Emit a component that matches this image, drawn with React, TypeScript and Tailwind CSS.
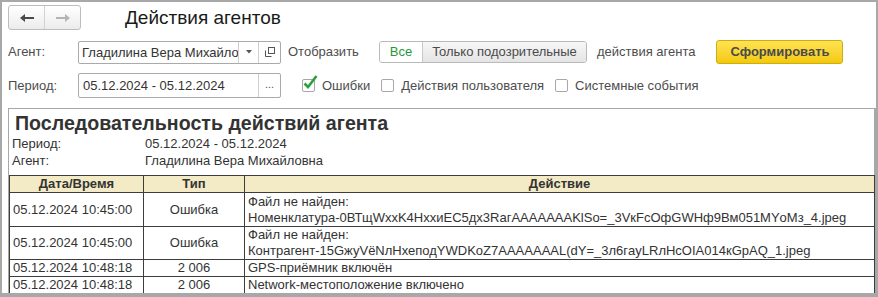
import React from "react";

const ROWS = [
  {
    date: "05.12.2024 10:45:00",
    type: "Ошибка",
    lines: [
      "Файл не найден:",
      "Номенклатура-0ВТщWxxK4НхxиЕС5дх3RагАААААААKlSo=_3VкFcОфGWHф9Вм051MYоМз_4.jpeg",
    ],
    h: "h-[34px]",
  },
  {
    date: "05.12.2024 10:45:00",
    type: "Ошибка",
    lines: [
      "Файл не найден:",
      "Контрагент-15GжуVёNлНхеподYWDKoZ7ААААААAL(dY=_3л6гayLRлНсОIА014кGpAQ_1.jpeg",
    ],
    h: "h-[33px]",
  },
  { date: "05.12.2024 10:48:18", type: "2 006", lines: ["GPS-приёмник включён"], h: "h-[17px]" },
  { date: "05.12.2024 10:48:18", type: "2 006", lines: ["Network-местоположение включено"], h: "h-[17px]" },
];

function Arrow({ dir, color }: { dir: "left" | "right"; color: string }) {
  return (
    <svg width="14" height="8" viewBox="0 0 14 8" className={dir === "right" ? "rotate-180" : ""}>
      <path d="M0 4 L5 0 V3 H14 V5 H5 V8 Z" fill={color} />
    </svg>
  );
}

function Checkbox({ checked, label }: { checked?: boolean; label: string }) {
  return (
    <label className="flex items-center">
      <span className="relative h-[13px] w-[13px] rounded-[2px] border border-[#a8a8a8] bg-white">
        {checked ? (
          <svg width="16" height="16" viewBox="0 0 16 16" className="absolute -top-[6px] left-0">
            <path d="M1.5 9.5 L5 13 L13.5 2" fill="none" stroke="#2f9e3f" strokeWidth="2.6" />
          </svg>
        ) : null}
      </span>
      <span className="ml-[7px] text-[13px] text-[#4d4d4d]">{label}</span>
    </label>
  );
}

export default function App() {
  return (
    <div className="h-[297px] w-[878px] overflow-hidden border-2 border-b-[4px] border-[#a8a8a8] bg-white font-['Liberation_Sans',Arial,sans-serif] text-[#4d4d4d]">
      <div className="ml-[6px] mt-[3px] flex items-center">
        <div className="flex h-[25px] w-[73px] rounded-[3px] border border-[#bdbdbd] bg-gradient-to-b from-white to-[#ececec]">
          <button className="flex w-[36px] items-center justify-center border-r border-[#d2d2d2]">
            <Arrow dir="left" color="#4a4a4a" />
          </button>
          <button className="flex flex-1 items-center justify-center">
            <Arrow dir="right" color="#b4b4b4" />
          </button>
        </div>
        <h1 className="ml-[44px] text-[19px] leading-[24px] text-[#1a1a1a]">Действия агентов</h1>
      </div>

      <div className="ml-[6px] mt-[10px] flex items-center text-[13px]">
        <span className="w-[70px]">Агент:</span>
        <div className="flex h-[23px] w-[203px] rounded-[2px] border border-[#aaaaaa] bg-white">
          <span className="flex-1 overflow-hidden whitespace-nowrap pl-[3px] leading-[21px] text-[#333]">
            Гладилина Вера Михайло
          </span>
          <span className="flex w-[20px] items-center justify-center border-l border-[#cfcfcf]">
            <svg width="6" height="4" viewBox="0 0 6 4">
              <path d="M0 0 H6 L3 3.5 Z" fill="#555" />
            </svg>
          </span>
          <span className="flex w-[22px] items-center justify-center border-l border-[#cfcfcf]">
            <svg width="10" height="10" viewBox="0 0 10 10">
              <rect x="3.5" y="0.5" width="6" height="6" fill="none" stroke="#555" />
              <path d="M0.5 3.5 V9.5 H6.5" fill="none" stroke="#555" />
            </svg>
          </span>
        </div>
        <span className="ml-[7px] w-[91px]">Отобразить</span>
        <div className="flex h-[22px] rounded-[3px] border border-[#b9b9b9]">
          <span className="flex w-[42px] items-center justify-center rounded-l-[3px] bg-white text-[#1f9a3b]">Все</span>
          <span className="flex w-[164px] items-center justify-center rounded-r-[3px] border-l border-[#c8c8c8] bg-gradient-to-b from-[#f7f7f7] to-[#e4e4e4] text-[#4a4a4a]">
            Только подозрительные
          </span>
        </div>
        <span className="ml-[10px]">действия агента</span>
        <button className="ml-[21px] h-[24px] w-[127px] rounded-[3px] border border-[#c9ad1a] bg-gradient-to-b from-[#ffe34f] to-[#f4c900] text-[13px] font-bold text-[#4a4a4a]">
          Сформировать
        </button>
      </div>

      <div className="ml-[6px] mt-[9px] flex items-start text-[13px]">
        <span className="flex h-[25px] w-[70px] items-center">Период:</span>
        <div className="flex h-[25px] w-[203px] rounded-[2px] border border-[#aaaaaa] bg-white">
          <span className="flex-1 pl-[4px] leading-[23px] text-[#333]">05.12.2024 - 05.12.2024</span>
          <span className="flex w-[22px] items-center justify-center border-l border-[#cfcfcf] pb-[2px] text-[11px] text-[#555]">
            ...
          </span>
        </div>
        <div className="ml-[21px] mt-[3px] flex items-center gap-[11px]">
          <Checkbox checked label="Ошибки" />
          <Checkbox label="Действия пользователя" />
          <Checkbox label="Системные события" />
        </div>
      </div>

      <div className="ml-[6px] mt-[10px] border-l border-r-2 border-t border-[#a8a8a8] text-[#333]">
        <div className="pl-[6px] pt-[2px] text-[19.6px] font-bold leading-[24px]">Последовательность действий агента</div>
        <div className="flex pl-[3px] text-[13px] leading-[17px]">
          <span className="w-[133px]">Период:</span>
          <span>05.12.2024 - 05.12.2024</span>
        </div>
        <div className="flex pl-[3px] text-[13px] leading-[17px]">
          <span className="w-[133px]">Агент:</span>
          <span>Гладилина Вера Михайловна</span>
        </div>
        <table className="mt-[6px] w-[865px] table-fixed border-collapse text-[13px] leading-[16px]">
          <colgroup>
            <col className="w-[134px]" />
            <col className="w-[101px]" />
            <col className="w-[630px]" />
          </colgroup>
          <thead>
            <tr className="h-[17px] bg-[#f3eac6] font-bold">
              <th className="border border-[#3d3d3d] p-0 text-center">Дата/Время</th>
              <th className="border border-[#3d3d3d] p-0 text-center">Тип</th>
              <th className="border border-[#3d3d3d] p-0 text-center">Действие</th>
            </tr>
          </thead>
          <tbody>
            {ROWS.map((r, i) => (
              <tr key={i} className={r.h}>
                <td className="border border-[#3d3d3d] px-[3px] py-0 whitespace-nowrap">{r.date}</td>
                <td className="border border-[#3d3d3d] p-0 text-center">{r.type}</td>
                <td className="border border-[#3d3d3d] px-[3px] py-0 whitespace-nowrap">
                  {r.lines.map((l) => (
                    <div key={l}>{l}</div>
                  ))}
                </td>
              </tr>
            ))}
            <tr className="h-[17px]">
              <td className="border border-[#3d3d3d] p-0" />
              <td className="border border-[#3d3d3d] p-0" />
              <td className="border border-[#3d3d3d] p-0" />
            </tr>
          </tbody>
        </table>
      </div>
    </div>
  );
}
